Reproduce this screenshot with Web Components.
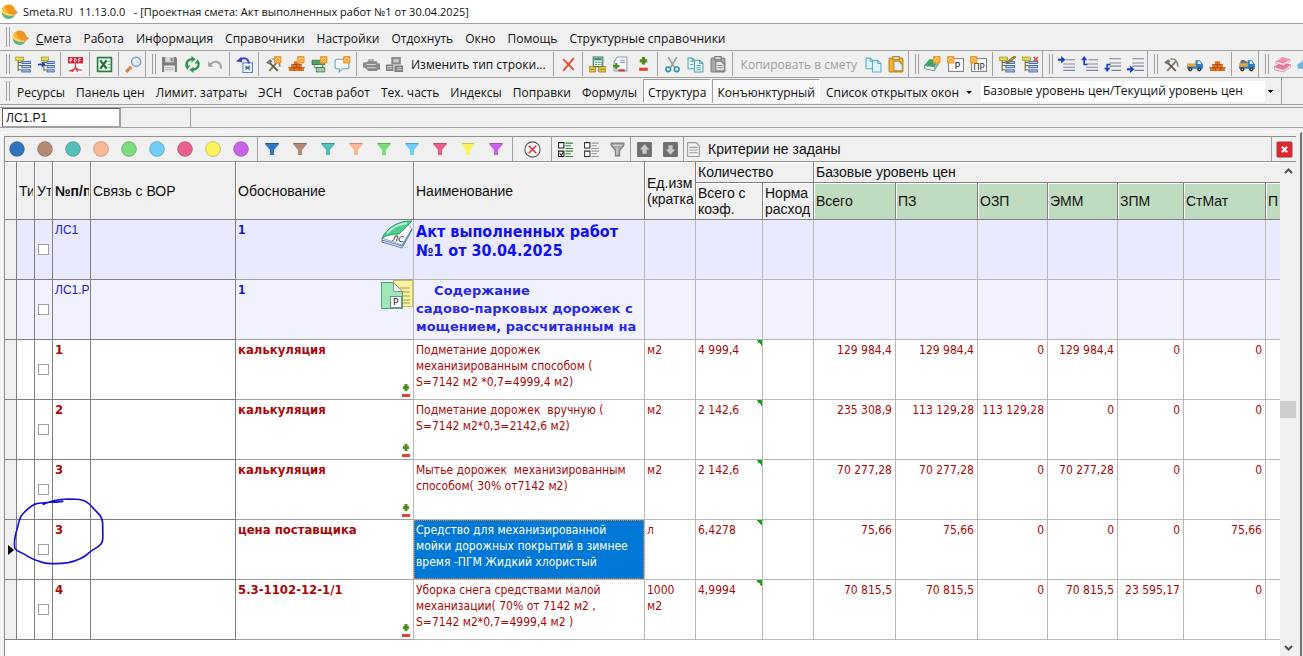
<!DOCTYPE html>
<html lang="ru">
<head>
<meta charset="utf-8">
<title>Smeta.RU 11.13.0.0</title>
<style>
  html, body {
    height: 100%;
    margin: 0;
  }
  body {
    overflow: hidden;
    font: 12px/16px "Open Sans", "Noto Sans", sans-serif;
    color: #111;
    background: #f0f0f0;
  }
</style>
</head>
<body>
<smeta-app></smeta-app>

<script>
const tree = `
  <path d="M1 3h7M3 4v10M3 6h3M3 9h3M3 13h3" stroke="#6a6a3a" fill="none"/>
  <rect x="0" y="1" width="8" height="3" fill="#e8e040" stroke="#8a8a10" stroke-width=".6"/>
  <g fill="#b8cdec" stroke="#345a9a" stroke-width=".8"><rect x="6.500" y="5" width="8" height="2"/><rect x="6.500" y="9" width="8" height="2"/><rect x="6.500" y="13" width="8" height="2"/></g>`;
const star = `
  <rect x="8.500" y="0" width="7" height="7" rx="1" fill="#f39a2c"/>
  <path d="M12 1v5M9.500 3.500h5M10.300 1.800l3.400 3.400M13.700 1.800l-3.400 3.400" stroke="#fff3c8" stroke-width=".8"/>
  <circle cx="12" cy="3.500" r="1.200" fill="#f39a2c"/>`;
const starLeft = `<g transform="translate(-8.500 0)">${star}</g>`;
const pick = `
  <path d="M4 14L12 5" stroke="#8f7a4c" stroke-width="1.800"/>
  <path d="M3 5l9 9" stroke="#555" stroke-width="1.600"/>
  <path d="M1 6l4-3 2 2-3 3z" fill="#777"/>
  <path d="M7 3c4-1 7 2 7 7" stroke="#888" stroke-width="1.500" fill="none"/>`;
const bricks = `
  <path d="M1 12.500h14M3 9.500h10M5.500 6.500h5" stroke="#e2701c" stroke-width="3"/>
  <path d="M0 11h16M3 8h10M6 11v3M11 11v3M8 8v3" stroke="#9e4208" stroke-width=".7"/>`;
const lines = '<path d="M7 3.500h9M5 7.500h11M5 10.500h11M5 13.500h11" stroke="#7d8597"/>';
const truck = `
  <path d="M1 7h8v4H1z" fill="#e9a23a"/>
  <path d="M9 4h4l3 4v4H1v-2h8z" fill="#2f7ec4"/>
  <path d="M11 5h2l1.500 2.500H11z" fill="#d8efff"/>
  <circle cx="4" cy="12.500" r="2" fill="#333"/><circle cx="12.500" cy="12.500" r="2" fill="#333"/>
  <circle cx="4" cy="12.500" r=".7" fill="#ccc"/><circle cx="12.500" cy="12.500" r=".7" fill="#ccc"/>`;
const sheets = '<path d="M1 2h4l3 3v7H1z"/><path d="M7 4h5l3 3v8H7z"/><path d="M12 4v3h3M5 2v3h3" fill="none"/>';
const paste = (board, page, edge) => `
  <rect x="1" y="2" width="13" height="13" rx="1" fill="${board}" stroke="${edge}"/>
  <rect x="4.500" y=".5" width="6" height="3" fill="#d9d9d9" stroke="${edge}"/>
  <path d="M5.500 5h5l3 3v6h-8z" fill="${page}" stroke="${edge}"/>`;

const icons = {
  logo: `
    <circle cx="7" cy="8" r="6.500" fill="#f7b733"/>
    <path d="M4 3c4-3 8-1 9 3l3 3-3 2c-4 1-7-2-9-8z" fill="#f39423"/>
    <path d="M1 9c2 3 7 4 12 2-1 3-4 4-6 4-3 0-6-2-6-6z" fill="#5cb487"/>
    <path d="M.700 6.500c2 4 6 5 11 5" stroke="#fbe48a" fill="none"/>`,
  tree,
  treeInto: `<g transform="translate(3 0)scale(.85 1)">${tree}</g><path d="M0 8h5" stroke="#1543c8" stroke-width="1.600"/><path d="M3.500 5L7 8l-3.500 3z" fill="#1543c8"/>`,
  treeEdit: `${tree}<path d="M8 5l6-5 2 1-6 5-3 1z" fill="#b98c2c" stroke="#63480e" stroke-width=".5"/>`,
  treeDel: `${tree}<path d="M11 1l4 4M15 1l-4 4" stroke="#e2413a" stroke-width="1.300"/>`,
  pdf: `
    <path d="M2 7h12v9H2z" fill="#fff"/><path d="M1 1h14v6H1z" fill="#d3202c"/>
    <path d="M3 6V2.500h1.500v1.700H3M7 2.500v3h.7c1.300 0 1.300-3 0-3zM11 6V2.500h2M11 4.200h1.700" stroke="#fff" stroke-width=".8" fill="none"/>
    <path d="M2 14c4 0 7-3 6-6-1 3 2 6 6 5M5 15l3-4 2 4" stroke="#e4323c" stroke-width="1.200" fill="none"/>`,
  excel: `
    <rect x="1.500" y="1.500" width="13" height="13" fill="#f3faf3" stroke="#2c7a3c" stroke-width="1.600"/>
    <path d="M4 4l6 8M10 4l-6 8" stroke="#1f7236" stroke-width="2"/>
    <path d="M11 5h3M11 8h3M11 11h3" stroke="#77ad80"/>`,
  find: `
    <path d="M1 15l5-5" stroke="#d98645" stroke-width="3"/>
    <circle cx="10.500" cy="5.500" r="4.300" fill="#dfe9fb" stroke="#8e9dbd" stroke-width="1.400"/>
    <path d="M8 5c.5-1.500 1.500-2 3-2" stroke="#fff" fill="none"/>`,
  save: `
    <path d="M1 1h13l1 1v13H1z" fill="#7d7d7d"/><path d="M4 1h8v5H4z" fill="#dadada"/>
    <path d="M9 2h2v3H9z" fill="#7d7d7d"/><path d="M3 9h10v6H3z" fill="#f1f1f1"/><path d="M4 11h8M4 13h8" stroke="#aaa"/>`,
  refresh: `
    <path d="M3 11C1 6 4 3 8 3M13 5c2 5-1 8-5 8" stroke="#2b9a45" stroke-width="2.200" fill="none"/>
    <path d="M7 0l4 3-4 3zM9 10l-4 3 4 3zM1 9l5 0-3 4zM15 7H10l3-4z" fill="#2b9a45"/>`,
  undo: '<path d="M3 8c5-5 11-2 10 4" stroke="#a3a3a3" stroke-width="2" fill="none"/><path d="M1 10V5l5 5z" fill="#a3a3a3"/>',
  rollback: `
    <rect x="6.500" y="6.500" width="9" height="9" fill="#f4f8ff" stroke="#5b82b3"/><path d="M9 9l4 4M13 9l-4 4M8.500 11h5" stroke="#3f66a0"/>
    <path d="M3 4c5-4 9-1 9 3" stroke="#3c46c8" stroke-width="1.800" fill="none"/><path d="M0 5l5-4 1 5z" fill="#3c46c8"/>`,
  pickNew: pick + star,
  pick,
  bricks,
  bricksNew: bricks + star,
  priceNew: `
    <path d="M1 4h12v4H1z" fill="#4ea263" stroke="#2c6b3c" stroke-width=".7"/>
    <path d="M3 8h8v3H3z" fill="#e9f5ea" stroke="#2c6b3c" stroke-width=".7"/>
    <path d="M5 11h8v4H5z" fill="#9fd2a8" stroke="#2c6b3c" stroke-width=".7"/>${star}`,
  noteNew: `<path d="M3 3h9c2 0 2 1 2 2v5c0 1-1 2-2 2H8l-3 3v-3H3c-1 0-2-1-2-2V5c0-1 1-2 2-2z" fill="#f7fcff" stroke="#6aa5b8"/>${star}`,
  engine: `
    <path d="M5 3h5v2h3l1 2h2v6h-2l-1 1H5l-3-3H0V6h2l3-1z" fill="#8a8a8a"/>
    <path d="M3 8h9M4 11h8M6 4h3" stroke="#d5d5d5"/>`,
  machines: `
    <path d="M5 1h9v7H5z" fill="#8d8d8d"/><path d="M7 3h5v3H7z" fill="#cdcdcd"/>
    <path d="M0 8h7v6H0zM8 9h8v6H8z" fill="#7c7c7c"/><path d="M1 10h5M1 12h5M10 11h5M10 13h5" stroke="#cfcfcf"/>`,
  remove: '<path d="M3 3l10 10M13 2L3 14" stroke="#e8492f" stroke-width="1.700"/>',
  calc: `
    <path d="M4 1h9v9H4z" fill="#e4efe8" stroke="#356f5c"/><path d="M5 2h7v2H5z" fill="#2f8e78"/>
    <path d="M6 6h6M6 8h6" stroke="#5c8c7f" stroke-dasharray="1.500 1"/>
    <path d="M0 10h6v5H0zM9 10h7v5H9z" fill="#f2cd58" stroke="#9a7412" stroke-width=".8"/><path d="M1 12.500h4M10 12.500h5" stroke="#9a7412"/>`,
  sheetPm: `
    <path d="M5 1h9v13H2V5z" fill="#f5f7fa" stroke="#90a0b4"/><path d="M8 4h4M8 6h4" stroke="#90a0b4"/>
    <path d="M1 9.500h6M4 6.500v6" stroke="#45901c" stroke-width="2"/><path d="M6 13.500h6" stroke="#d73a2b" stroke-width="2"/>`,
  plusMinus: '<path d="M4.500 4.500h7M8 1v7" stroke="#4f8d1c" stroke-width="3"/><path d="M4 12.500h8" stroke="#e0442f" stroke-width="3"/>',
  cut: `
    <path d="M4 1l6 10M12 1L6 11" stroke="#8f9ca4" stroke-width="1.500"/>
    <circle cx="4" cy="12.500" r="2.200" fill="none" stroke="#2d95a8" stroke-width="1.500"/><circle cx="12" cy="12.500" r="2.200" fill="none" stroke="#2d95a8" stroke-width="1.500"/>`,
  copy: `<g fill="#e8f8fb" stroke="#53a5b5">${sheets}</g><path d="M3 5h3M3 8h3M9 9h4M9 11h4M9 13h4" stroke="#53a5b5"/>`,
  copyPlain: `<g fill="#dcf4fa" stroke="#62afc4">${sheets}</g>`,
  pasteOff: paste('#a9a9a9', '#e6e6e6', '#7d7d7d') + '<path d="M7 9h5M7 11h5" stroke="#8d8d8d"/>',
  pasteOn: paste('#f3b52e', '#dff1fb', '#b68422'),
  bookNew: `
    <path d="M0 9l5-6h9l-4 7z" fill="#3fa56a"/><path d="M0 9l10 1v4L1 12z" fill="#e8f2f2" stroke="#477d72" stroke-width=".7"/>
    <path d="M10 10l4-6v4l-4 6z" fill="#88b3a3"/>${star}`,
  pNew: `<rect x="1.500" y="2.500" width="14" height="12" fill="#fff" stroke="#808080"/><text x="7" y="12.500" font-size="9" font-family="DejaVu Sans" fill="#123">Р</text>${starLeft}`,
  prNew: `<rect x="1.500" y="2.500" width="14" height="12" fill="#fff" stroke="#808080"/><text x="3" y="13" font-size="8" font-family="DejaVu Sans" fill="#123">ПР</text>${starLeft}`,
  lvlRight: lines + '<path d="M0 3.500h4" stroke="#1840d0" stroke-width="2"/><path d="M3 0l4 3.500L3 7z" fill="#1840d0"/>',
  lvlUp: lines + '<path d="M3 3v5h3" stroke="#1840d0" stroke-width="1.500" fill="none"/><path d="M0 4l3-4 3 4z" fill="#1840d0"/>',
  lvlDown: '<path d="M5 2.500h11M5 6.500h11M5 9.500h11M7 13.500h9" stroke="#7d8597"/><path d="M3 13V8h3" stroke="#1840d0" stroke-width="1.500" fill="none"/><path d="M0 11h6l-3 4z" fill="#1840d0"/>',
  lvlLast: '<path d="M5 2.500h11M5 6.500h11M5 9.500h11M7 13.500h9" stroke="#7d8597"/><path d="M0 12.500h4" stroke="#1840d0" stroke-width="2"/><path d="M3 9l4 3.500L3 16z" fill="#1840d0"/>',
  truck,
  truckLoad: `${truck}<path d="M2 7c0-3 2-4 4-3s3 1 3 3z" fill="#77716a"/>`,
  books: `
    <path d="M0 10l7-4 9 2-7 5z" fill="#e9789a"/><path d="M0 10v3l9 2 7-5V8l-7 5z" fill="#f7e4ea" stroke="#c45b7c" stroke-width=".5"/>
    <path d="M2 5l6-4 7 2-6 4z" fill="#f08fae"/><path d="M2 5v2l7 2 6-4V3L9 7z" fill="#fff" stroke="#c45b7c" stroke-width=".5"/>`,
  cloud: '<path d="M1 12c-2-4 1-6 3-6 1-4 8-4 9 0 3 1 3 6 0 6z" fill="#67b8e8"/>',
  cancel: '<circle cx="8" cy="8" r="7.200" fill="#f6f6f6" stroke="#555"/><path d="M4.500 4.500l7 7M11.500 4.500l-7 7" stroke="#e0343a" stroke-width="1.500"/>',
  checkList: `
    <path d="M1.500 1.500h5v5h-5zM1.500 9.500h5v5h-5z" fill="#fff" stroke="#222"/><path d="M2.500 11.500l1.500 2 2-3" stroke="#222" fill="none"/>
    <path d="M8 2h7M8 4.500h5M8 7h7M8 9.500h7M8 12h5M8 14.500h7" stroke="#2d8a3c"/>`,
  plainList: '<path d="M1.500 1.500h5v5h-5zM1.500 9.500h5v5h-5z" fill="#fff" stroke="#333"/><path d="M8 2h7M8 4.500h5M8 7h7M8 9.500h7M8 12h5M8 14.500h7" stroke="#9a9a9a"/>',
  funnelOff: '<path d="M2 2h12v2l-4 5v5H6V9L2 4z" fill="#a4a4a4" stroke="#7a7a7a"/><path d="M4 4h8M7.500 6v7" stroke="#ddd"/>',
  up: '<rect x="1" y="1" width="14" height="14" rx="1" fill="#6f6f6f"/><path d="M8 3l4.500 5H10v4H6V8H3.500z" fill="#c9c9c9"/>',
  down: '<rect x="1" y="1" width="14" height="14" rx="1" fill="#6f6f6f"/><path d="M8 13L3.500 8H6V4h4v4h2.500z" fill="#c9c9c9"/>',
  doc: '<path d="M2.500 1.500h8l3 3v10h-11z" fill="#f2f2f2" stroke="#9a9a9a"/><path d="M4 6h8M4 8.500h8M4 11h8" stroke="#9a9a9a"/>',
  close: '<rect x="1" y="1" width="14" height="14" rx="1" fill="#e0262c" stroke="#a8363a"/><path d="M5.500 5.500l5 5M10.500 5.500l-5 5" stroke="#fff" stroke-width="2"/>',
};

class SmetaIcon extends HTMLElement {
  connectedCallback() {
    const root = this.shadowRoot || this.attachShadow({ mode: 'open' });
    root.innerHTML = `
      <style>
        :host { display: block; width: 17px; height: 17px; flex: none; }
        svg { display: block; }
      </style>
      <svg width="100%" height="100%" viewBox="0 0 16 16" aria-hidden="true">${icons[this.getAttribute('name')]}</svg>`;
  }
}
customElements.define('smeta-icon', SmetaIcon);

// Dockable strip: two-line grip on the left, border on the right
const bandTemplate = document.createElement('template');
bandTemplate.innerHTML = `
<style>
  :host {
    display: flex;
    flex: none;
    align-items: center;
    border-right: 1px solid #a0a0a0;
  }
  :host([open]) { border-right: 0; }
  .grip {
    width: 2px;
    height: 20px;
    margin: 0 2px 0 6px;
    border: solid #a0a0a0;
    border-width: 0 1px;
  }
</style>
<span class="grip"></span>
<slot></slot>
`;

class SmetaBand extends HTMLElement {
  constructor() {
    super();
    this.attachShadow({ mode: 'open' }).appendChild(bandTemplate.content.cloneNode(true));
  }
}
customElements.define('smeta-band', SmetaBand);

const tools = [
  ['tree', 'treeInto', '|', 'pdf', '|', 'excel', '|', 'find'],
  ['save', 'refresh', 'undo', '|', 'rollback', '|', 'pickNew', 'bricksNew', 'priceNew', 'noteNew', '|', 'engine', 'machines',
    '=Изменить тип строки...', '|', 'remove', '|', 'calc', 'sheetPm', 'plusMinus', '|', 'cut', 'copy', 'pasteOff', '|',
    '-Копировать в смету', 'copyPlain', 'pasteOn'],
  ['bookNew', 'pNew', 'prNew', '|', 'treeEdit', 'treeDel'],
  ['lvlRight', 'lvlUp', 'lvlDown', 'lvlLast'],
  ['pick', 'truck', 'bricks', '|', 'truckLoad'],
  ['books', 'cloud'],
];

function toolItem(t) {
  if (t === '|') return '<i></i>';
  if (t[0] === '=') return `<button class="text">${t.slice(1)}</button>`;
  if (t[0] === '-') return `<button class="text" disabled>${t.slice(1)}</button>`;
  return `<button aria-label="${t}"><smeta-icon name="${t}"></smeta-icon></button>`;
}

class SmetaToolbar extends HTMLElement {
  constructor() {
    super();
    this.attachShadow({ mode: 'open' }).innerHTML = `
      <style>
        :host { display: flex; height: 26px; overflow: hidden; border-bottom: 1px solid #a0a0a0; }
        button {
          flex: none;
          display: grid;
          place-items: center;
          width: 23px;
          height: 24px;
          padding: 0;
          border: 0;
          background: none;
          font: inherit;
          color: inherit;
          white-space: nowrap;
        }
        button.text { width: auto; padding: 2px 5px 0; }
        button:disabled { color: #a0a0a0; }
        i { width: 1px; height: 24px; margin: 0 3px 0 2px; background: #a0a0a0; }
      </style>
      ${tools.map(g => `<smeta-band>${g.map(toolItem).join('')}</smeta-band>`).join('')}`;
  }
}
customElements.define('smeta-toolbar', SmetaToolbar);

class SmetaMenu extends HTMLElement {
  constructor() {
    super();
    const items = ['<u>С</u>мета', 'Работа', 'Информация', 'Справочники', 'Настройки', 'Отдохнуть', 'Окно', 'Помощь', 'Структурные справочники'];
    this.attachShadow({ mode: 'open' }).innerHTML = `
      <style>
        :host { display: block; height: 26px; border-bottom: 1px solid #a0a0a0; }
        smeta-band { height: 26px; }
        nav { display: flex; align-items: center; gap: 12px; padding-top: 4px; }
        smeta-icon { margin-right: 7px; }
        button { padding: 0; border: 0; background: none; font: inherit; color: inherit; white-space: nowrap; }
      </style>
      <smeta-band open>
        <smeta-icon name="logo"></smeta-icon>
        <nav>${items.map(t => `<button>${t}</button>`).join('')}</nav>
      </smeta-band>`;
  }
}
customElements.define('smeta-menu', SmetaMenu);

class SmetaTabs extends HTMLElement {
  constructor() {
    super();
    const items = ['Ресурсы', 'Панель цен', 'Лимит. затраты', 'ЭСН', 'Состав работ', 'Тех. часть', 'Индексы', 'Поправки', 'Формулы'];
    this.attachShadow({ mode: 'open' }).innerHTML = `
      <style>
        :host { display: flex; height: 26px; border-bottom: 1px solid #a0a0a0; }
        smeta-band { padding-right: 5px; }
        nav { display: flex; align-items: center; gap: 1px; }
        button {
          height: 24px;
          padding: 4px 5px 0;
          border: 0;
          background: none;
          font: inherit;
          color: inherit;
          white-space: nowrap;
        }
        .on { padding: 4px 4px 0; border: 1px solid; border-color: #a0a0a0 #fff #fff #a0a0a0; background: #f8f8f8; }
        .drop::after {
          content: "";
          display: inline-block;
          margin: 0 0 3px 7px;
          border: 3px solid transparent;
          border-top-color: #111;
          border-bottom: 0;
        }
        select {
          appearance: none;
          width: 295px;
          height: 21px;
          margin-left: 3px;
          padding: 0 2px;
          border: 0;
          border-radius: 0;
          background:
            conic-gradient(from -45deg at 50% 100%, #111 90deg, #0000 0) right 3px top 9px / 6px 3px no-repeat,
            linear-gradient(#f0f0f0, #f0f0f0) right / 11px 100% no-repeat, #fff;
          font: inherit;
          color: inherit;
        }
      </style>
      <smeta-band>
        <nav>
          ${items.map(t => `<button>${t}</button>`).join('')}
          <button class="on">Структура</button>
          <button class="on">Конъюнктурный</button>
          <button class="drop">Список открытых окон</button>
          <select aria-label="Уровень цен"><option>Базовые уровень цен/Текущий уровень цен</option></select>
        </nav>
      </smeta-band>`;
  }
}
customElements.define('smeta-tabs', SmetaTabs);

const colours = [
  ['синий', '#2f74bd'], ['коричневый', '#b58a74'], ['бирюзовый', '#52bfb8'], ['персиковый', '#fbb894'], ['зелёный', '#7cdc7c'],
  ['голубой', '#70cdf5'], ['розовый', '#e85f8c'], ['жёлтый', '#fbf35c'], ['фиолетовый', '#c862e8'],
];

class SmetaFilters extends HTMLElement {
  constructor() {
    super();
    const dots = colours.map(([n, c]) => `<button aria-label="${n}"><svg width="18" height="18" viewBox="0 0 18 18">
      <circle cx="9" cy="9" r="7.500" fill="${c}" stroke="#0003"/></svg></button>`).join('');
    const funnels = colours.map(([n, c]) => `<button aria-label="Фильтр: ${n}"><svg width="14" height="12" viewBox="0 0 14 12">
      <path d="M0 0h14v1L9 7v5H5V7L0 1z" fill="${c}"/><path d="M1 .5h12" stroke="#0003"/></svg></button>`).join('');
    const btn = n => `<button aria-label="${n}"><smeta-icon name="${n}"></smeta-icon></button>`;
    this.attachShadow({ mode: 'open' }).innerHTML = `
      <style>
        :host {
          display: flex;
          height: 24px;
          border-bottom: 1px solid #909090;
          font: 14px/16px "Liberation Sans", sans-serif;
        }
        .group { display: flex; align-items: center; gap: 2px; padding: 0 1px; border-right: 1px solid #a0a0a0; }
        .wide { gap: 4px; padding: 0 4px 0 2px; }
        .first { padding-left: 0; }
        .one { padding: 0 7px; }
        .rest { flex: 1; gap: 6px; }
        button { display: grid; place-items: center; width: 24px; height: 24px; padding: 0; border: 0; background: none; }
      </style>
      <div class="group wide first">${dots}</div>
      <div class="group wide">${funnels}</div>
      <div class="group one">${btn('cancel')}</div>
      <div class="group">${btn('checkList')}${btn('plainList')}${btn('funnelOff')}</div>
      <div class="group">${btn('up')}${btn('down')}</div>
      <div class="group rest"><smeta-icon name="doc"></smeta-icon><span>Критерии не заданы</span></div>
      ${btn('close')}`;
  }
}
customElements.define('smeta-filters', SmetaFilters);

const book = `<svg class="pic" width="32" height="30" viewBox="0 0 32 30">
  <path d="M1 18L21 25 31 9 24 1 12 8z" fill="#fff" stroke="#7fa3c4"/>
  <path d="M1 18C6 8 16 1 31 1L18 14C12 14 6 15 1 18z" fill="#4fcf8e" stroke="#2a9a66"/>
  <path d="M6 13C12 7 18 4 26 3" stroke="#b9f2d4" stroke-width="2" fill="none"/>
  <path d="M1 18v4l20 6 10-18M1 20l20 6 10-17" stroke="#5f86ad" fill="none"/>
  <text x="11" y="21" font-size="8" font-style="italic" font-weight="normal" font-family="DejaVu Sans" fill="#111" transform="rotate(6 11 21)">ЛС</text></svg>`;
const folder = `<svg class="pic" width="32" height="30" viewBox="0 0 32 30">
  <rect x="12.500" y=".5" width="19" height="26" fill="#fbf4a0" stroke="#c9b96a"/>
  <path d="M17 8h12M17 12h12M17 16h12M17 20h12M20 23h9" stroke="#a89a50"/>
  <path d="M.500 2.500h12l9 9v17H.500z" fill="#9ee8b8" stroke="#4da474"/>
  <path d="M12.500 2.500v9h9z" fill="#f2fff6" stroke="#8a9a80"/>
  <rect x="9.500" y="16.500" width="11" height="11" fill="#fff" stroke="#6f8f7d"/>
  <text x="12" y="25" font-size="9" font-weight="normal" font-family="DejaVu Sans" fill="#111">Р</text></svg>`;
const pm = `<svg class="pm" width="8" height="14" viewBox="0 0 8 14">
  <path d="M1 3.500h6M4 0v7" stroke="#4f8d1c" stroke-width="3"/><path d="M0 11.500h8" stroke="#e0442f" stroke-width="3"/></svg>`;
const loop = `<svg class="loop" width="95" height="72" viewBox="36 168 285 216">
  <path d="M130 193C150 183 175 178 205 177C240 177 255 180 268 192L300 226C307 236 308 242 308 250C308 300 312 305 298 317C288 326 275 330 265 340C250 355 230 362 205 368C180 372 145 372 130 368C100 360 90 354 75 344C60 334 50 335 45 325C41 310 46 285 51 268C57 250 56 235 68 222C85 205 92 196 110 191C130 187 160 187 188 184"
    fill="none" stroke="#1411d4" stroke-width="5" stroke-linecap="round"/></svg>`;

const rows = [
  { kind: 'doc', no: 'ЛС1', base: '1', pic: book, name: 'Акт выполненных работ №1 от 30.04.2025' },
  { kind: 'part', no: 'ЛС1.Р1', base: '1', pic: folder, name: '    Содержание\nсадово-парковых дорожек с\nмощением, рассчитанным на' },
  { no: '1', base: 'калькуляция', pic: pm, name: 'Подметание дорожек\nмеханизированным способом (\nS=7142 м2 *0,7=4999,4 м2)', unit: 'м2', qty: '4 999,4', sums: ['129 984,4', '129 984,4', '0', '129 984,4', '0', '0'] },
  { no: '2', base: 'калькуляция', pic: pm, name: 'Подметание дорожек  вручную (\nS=7142 м2*0,3=2142,6 м2)', unit: 'м2', qty: '2 142,6', sums: ['235 308,9', '113 129,28', '113 129,28', '0', '0', '0'] },
  { no: '3', base: 'калькуляция', pic: pm, name: 'Мытье дорожек  механизированным\nспособом( 30% от7142 м2)', unit: 'м2', qty: '2 142,6', sums: ['70 277,28', '70 277,28', '0', '70 277,28', '0', '0'] },
  { current: true, no: '3', base: 'цена поставщика', pic: '', name: 'Средство для механизированной\nмойки дорожных покрытий в зимнее\nвремя -ПГМ Жидкий хлористый', unit: 'л', qty: '6,4278', sums: ['75,66', '75,66', '0', '0', '0', '75,66'] },
  { no: '4', base: '5.3-1102-12-1/1', pic: pm, name: 'Уборка снега средствами малой\nмеханизации( 70% от 7142 м2 ,\nS=7142 м2*0,7=4999,4 м2 )', unit: '1000\nм2', qty: '4,9994', sums: ['70 815,5', '70 815,5', '0', '70 815,5', '23 595,17', '0'] },
];
const widths = [12, 18, 18, 38, 145, 178, 231, 51, 67, 51, 82, 82, 70, 70, 66, 82];

function gridRow(r, i) {
  const sums = r.sums || ['', '', '', '', '', ''];
  return `<tr class="${r.kind || 'pos'}${r.current ? ' current' : ''}">
    <td class="dark ind"><div>${r.current ? '<b></b>' : ''}</div></td>
    <td class="dark"></td>
    <td class="dark check"><div><input type="checkbox" aria-label="Строка ${i + 1}"></div>${r.current ? loop : ''}</td>
    <td class="dark no"><div>${r.no}</div></td>
    <td class="dark"></td>
    <td class="base"><div><span>${r.base}</span>${r.pic}</div></td>
    <td class="name"><div>${r.name}</div></td>
    <td class="unit"><div>${r.unit || ''}</div></td>
    <td class="${r.qty ? 'formula' : ''}"><div>${r.qty || ''}</div></td>
    <td></td>
    ${sums.map(s => `<td class="sum"><div>${s}</div></td>`).join('')}
    <td></td>
  </tr>`;
}

class SmetaGrid extends HTMLElement {
  constructor() {
    super();
    this.attachShadow({ mode: 'open' }).innerHTML = `
      <style>
        :host {
          display: block;
          flex: 1;
          min-width: 0;
          overflow: hidden;
          background: #fff;
          font: 12px/16px "DejaVu Sans Condensed", "DejaVu Sans", sans-serif;
        }
        table { width: 100%; table-layout: fixed; border-collapse: separate; border-spacing: 0; }
        th, td { padding: 0; border: solid #b8b8b8; border-width: 0 1px 1px 0; text-align: left; }
        th:last-child, td:last-child { border-right: 0; }
        th {
          height: 36px;
          overflow: hidden;
          border-color: #808080;
          background: #f0f0f0;
          box-shadow: inset 1px 1px #fff;
          font: 14px/16px "Liberation Sans", sans-serif;
          white-space: pre;
        }
        th div { margin: 0 1px 0 2px; overflow: hidden; }
        .top th { height: 20px; }
        th.bold { font-weight: bold; }
        .price th.g { background: #c0dcc0; }
        td { height: 59px; vertical-align: top; color: #a80808; }
        td div { box-sizing: border-box; height: 59px; padding: 2px 2px 0; overflow: hidden; white-space: pre; }
        td.dark { border-color: #808080; }
        td.base { border-bottom-color: #a0a0a0; }
        tr.doc td { background: #eaeaff; }
        tr.part td { background: #f2f2ff; }
        tr td.ind { background: #f0f0f0; }
        .ind div { display: flex; align-items: center; padding: 0 0 0 3px; }
        .ind b { border: 5px solid transparent; border-left: 6px solid #000; border-right: 0; }
        .check { position: relative; }
        .check div { display: grid; place-items: center; padding: 0; }
        input {
          appearance: none;
          width: 11px;
          height: 11px;
          margin: 0;
          border: 1px solid #a0a0a0;
          background: #fff;
        }
        .loop { position: absolute; left: -23px; top: -24px; z-index: 1; pointer-events: none; }
        .pos .no, .pos .base { font-size: 13px; font-weight: bold; }
        .doc .no, .part .no { color: #2020c8; font: 12px/16px "Liberation Sans", sans-serif; }
        .doc .base, .part .base { color: #1818c0; font-weight: bold; }
        .base div { display: flex; justify-content: space-between; padding-right: 0; }
        .pic { margin-top: -2px; }
        .pm { align-self: flex-end; margin: 0 3px 1px 0; }
        .doc .name { color: #1010f0; font-size: 16px; font-weight: bold; line-height: 19px; }
        .doc .name div { white-space: normal; }
        .part .name { color: #2828e8; font: bold 13px/18px "DejaVu Sans", sans-serif; }
        .current .name { background: #0078d7; color: #fff; }
        .current .name div { padding: 1px; border: 1px dotted #d9822b; }
        .formula { background: linear-gradient(to bottom left, #18a018 50%, #0000 50%) top right / 6px 6px no-repeat; }
        .sum div { padding-right: 3px; text-align: right; }
      </style>
      <table>
        <colgroup>${widths.map(w => `<col style="width:${w}px">`).join('')}<col></colgroup>
        <thead>
          <tr class="top">
            <th rowspan="2"></th>
            <th rowspan="2"><div>Ти</div></th>
            <th rowspan="2"><div>Ут</div></th>
            <th rowspan="2" class="bold"><div>№п/п</div></th>
            <th rowspan="2"><div>Связь с ВОР</div></th>
            <th rowspan="2"><div>Обоснование</div></th>
            <th rowspan="2"><div>Наименование</div></th>
            <th rowspan="2"><div>Ед.изм\n(кратка</div></th>
            <th colspan="2"><div>Количество</div></th>
            <th colspan="7"><div>Базовые уровень цен</div></th>
          </tr>
          <tr class="price">
            <th><div>Всего с\nкоэф.</div></th>
            <th><div>Норма\nрасход</div></th>
            ${['Всего', 'ПЗ', 'ОЗП', 'ЭММ', 'ЗПМ', 'СтМат', 'П'].map(t => `<th class="g"><div>${t}</div></th>`).join('')}
          </tr>
        </thead>
        <tbody>${rows.map(gridRow).join('')}</tbody>
      </table>`;
  }
}
customElements.define('smeta-grid', SmetaGrid);

class SmetaScroll extends HTMLElement {
  constructor() {
    super();
    this.attachShadow({ mode: 'open' }).innerHTML = `
      <style>
        :host { display: flex; flex-direction: column; flex: none; width: 16px; background: #f0f0f0; }
        button { height: 17px; padding: 0; border: 0; background: none; display: grid; place-items: center; }
        span { flex: 1; }
        b { height: 17px; background: #cdcdcd; }
        path { fill: none; stroke: #505050; stroke-width: 2; }
      </style>
      <button aria-label="Вверх"><svg width="9" height="6"><path d="M1 5l3.500-3.500L8 5"/></svg></button>
      <span></span><b></b><span></span>
      <button aria-label="Вниз"><svg width="9" height="6"><path d="M1 1l3.500 3.500L8 1"/></svg></button>`;
  }
}
customElements.define('smeta-scroll', SmetaScroll);

class SmetaApp extends HTMLElement {
  constructor() {
    super();
    this.attachShadow({ mode: 'open' }).innerHTML = `
      <style>
        :host { display: flex; flex-direction: column; height: 100vh; }
        header {
          display: flex;
          align-items: center;
          gap: 5px;
          height: 23px;
          padding-left: 1px;
          border-bottom: 1px solid #a0a0a0;
          background: #fff;
          font-size: 11px;
        }
        header span { white-space: pre; }
        .path {
          display: flex;
          height: 19px;
          margin-top: 2px;
          padding-left: 2px;
          border: solid #a0a0a0;
          border-width: 1px 0;
        }
        .path input {
          box-sizing: border-box;
          width: 119px;
          padding: 0 3px;
          border: solid;
          border-width: 1px 2px 1px 1px;
          border-color: #606060 #a0a0a0 #a0a0a0 #606060;
          background: #fff;
          font: 12px/16px "Liberation Sans", sans-serif;
          color: #111;
        }
        .path span { width: 69px; border-right: 1px solid #a0a0a0; }
        main {
          display: flex;
          flex: 1;
          flex-direction: column;
          min-height: 0;
          margin: 4px 1px 0 1px;
          padding: 3px 4px 0 2px;
          border: solid #fff;
          border-width: 1px 0 0 1px;
          border-right: 2px solid #707070;
        }
        .frame {
          display: flex;
          flex: 1;
          flex-direction: column;
          min-height: 0;
          border: solid #909090;
          border-width: 1px 0 0 1px;
        }
        .view { display: flex; flex: 1; min-height: 0; }
      </style>
      <header><smeta-icon name="logo"></smeta-icon><span>Smeta.RU  11.13.0.0   - [Проектная смета: Акт выполненных работ №1 от 30.04.2025]</span></header>
      <smeta-menu></smeta-menu>
      <smeta-toolbar></smeta-toolbar>
      <smeta-tabs></smeta-tabs>
      <div class="path"><input aria-label="Текущий раздел" value="ЛС1.Р1"><span></span></div>
      <main>
        <div class="frame">
          <smeta-filters></smeta-filters>
          <div class="view"><smeta-grid></smeta-grid><smeta-scroll></smeta-scroll></div>
        </div>
      </main>`;
  }
}
customElements.define('smeta-app', SmetaApp);
</script>
</body>
</html>
